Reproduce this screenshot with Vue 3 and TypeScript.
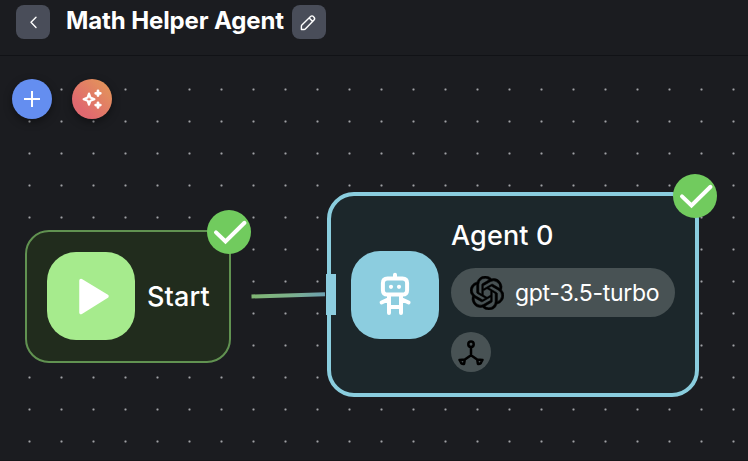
<script setup lang="ts">
import { ref } from 'vue'

interface FlowNode {
  id: string
  title: string
  kind: 'start' | 'agent'
  model?: string
}

const title = ref('Math Helper Agent')
const nodes = ref<FlowNode[]>([
  { id: 'start', title: 'Start', kind: 'start' },
  { id: 'agent', title: 'Agent 0', kind: 'agent', model: 'gpt-3.5-turbo' },
])
</script>

<template>
  <main class="app">
    <header class="header">
      <button class="square" aria-label="Back">
        <svg width="34" height="34" viewBox="0 0 34 34"><path d="M20 12.2 15 17.3l5 5.1" /></svg>
      </button>
      <h1>{{ title }}</h1>
      <button class="square" aria-label="Rename">
        <svg width="34" height="34" viewBox="0 0 34 34">
          <path d="M9.4 24.5v-3.2q0-.7.5-1.2l8.4-8.4q1.7-1.7 3.3 0l.2.2q1.7 1.7 0 3.4L13.3 24q-.5.5-1.2.5zM17.2 12.9l3.5 3.5" />
        </svg>
      </button>
    </header>

    <section class="canvas">
      <div class="dots"></div>
      <div class="toolbar">
        <button class="round add" aria-label="Add">
          <svg width="40" height="40" viewBox="0 0 40 40"><path d="M20 12v16M12 20h16" /></svg>
        </button>
        <button class="round magic" aria-label="Generate">
          <svg width="40" height="40" viewBox="0 0 40 40">
            <path d="M17 14.6l1.4 4 4 1.6-4 1.5-1.4 4-1.4-4-4-1.5 4-1.6z" />
            <path class="plus" d="M26 12v4.6M23.7 14.3h4.6M26 23.8v4.6M23.7 26.1h4.6" />
          </svg>
        </button>
      </div>

      <svg class="edge" width="76" height="10" viewBox="0 0 76 10">
        <defs>
          <linearGradient id="edge-fade" x1="0" x2="76" y1="0" y2="0" gradientUnits="userSpaceOnUse">
            <stop offset="0" stop-color="#80b672" />
            <stop offset=".5" stop-color="#7eb28a" />
            <stop offset="1" stop-color="#6b9fb2" />
          </linearGradient>
        </defs>
        <path d="M1.5 6.5 75 4.3" stroke="url(#edge-fade)" />
      </svg>

      <article v-for="node in nodes" :key="node.id" class="node" :class="node.kind">
        <span v-if="node.kind === 'agent'" class="handle"></span>
        <div class="tile">
          <svg v-if="node.kind === 'start'" width="88" height="88" viewBox="0 0 88 88">
            <path class="play" d="M34 28.5 60 44.3 34 60.5z" />
          </svg>
          <svg v-else width="88" height="88" viewBox="0 0 88 88">
            <path class="bot" d="M44 23.7V27.500M36.500 27.500h15q4.600 0 4.600 4.600v6.800q0 4.600-4.600 4.600h-15q-4.600 0-4.600-4.600v-6.800q0-4.600 4.600-4.600zM38 44.500v17.500M50 44.500v17.500M38 56h12M37.500 48.300 30.600 51.500M50.500 48.300 57.600 51.500" />
            <circle cx="40" cy="35.800" r="2.100" /><circle cx="48" cy="35.800" r="2.100" />
          </svg>
        </div>
        <div class="info">
          <h2>{{ node.title }}</h2>
          <template v-if="node.model">
            <div class="model">
              <svg width="34" height="34" viewBox="0 0 24 24">
                <path d="M22.2819 9.8211a5.9847 5.9847 0 0 0-.5157-4.9108 6.0462 6.0462 0 0 0-6.5098-2.9A6.0651 6.0651 0 0 0 4.9807 4.1818a5.9847 5.9847 0 0 0-3.9977 2.9 6.0462 6.0462 0 0 0 .7427 7.0966 5.98 5.98 0 0 0 .511 4.9107 6.051 6.051 0 0 0 6.5146 2.9001A5.9847 5.9847 0 0 0 13.2599 24a6.0557 6.0557 0 0 0 5.7718-4.2058 5.9894 5.9894 0 0 0 3.9977-2.9001 6.0557 6.0557 0 0 0-.7475-7.0729zm-9.022 12.6081a4.4755 4.4755 0 0 1-2.8764-1.0408l.1419-.0804 4.7783-2.7582a.7948.7948 0 0 0 .3927-.6813v-6.7369l2.02 1.1686a.071.071 0 0 1 .038.052v5.5826a4.504 4.504 0 0 1-4.4945 4.4944zm-9.6607-4.1254a4.4708 4.4708 0 0 1-.5346-3.0137l.142.0852 4.783 2.7582a.7712.7712 0 0 0 .7806 0l5.8428-3.3685v2.3324a.0804.0804 0 0 1-.0332.0615L9.74 19.9502a4.4992 4.4992 0 0 1-6.1408-1.6464zM2.3408 7.8956a4.485 4.485 0 0 1 2.3655-1.9728V11.6a.7664.7664 0 0 0 .3879.6765l5.8144 3.3543-2.0201 1.1685a.0757.0757 0 0 1-.071 0l-4.8303-2.7865A4.504 4.504 0 0 1 2.3408 7.872zm16.5963 3.8558L13.1038 8.364 15.1192 7.2a.0757.0757 0 0 1 .071 0l4.8303 2.7913a4.4944 4.4944 0 0 1-.6765 8.1042v-5.6772a.79.79 0 0 0-.407-.667zm2.0107-3.0231l-.142-.0852-4.7735-2.7818a.7759.7759 0 0 0-.7854 0L9.409 9.2297V6.8974a.0662.0662 0 0 1 .0284-.0615l4.8303-2.7866a4.4992 4.4992 0 0 1 6.6802 4.66zM8.3065 12.863l-2.02-1.1638a.0804.0804 0 0 1-.038-.0567V6.0742a4.4992 4.4992 0 0 1 7.3757-3.4537l-.142.0805L8.704 5.459a.7948.7948 0 0 0-.3927.6813zm1.0976-2.3654l2.602-1.4998 2.6069 1.4998v2.9994l-2.5974 1.4997-2.6067-1.4997Z" />
              </svg>
              <span>{{ node.model }}</span>
            </div>
            <div class="tool">
              <svg width="40" height="40" viewBox="0 0 40 40">
                <circle cx="20" cy="12.2" r="2.7" />
                <path d="M20 15v8.2l-6.5 4.5M20 23.2l6.5 4.5M8.5 27.900l5.300-.3-.7 4.300q-2.900.3-3.400-1.900zM31.500 27.900l-5.300-.3.7 4.300q2.900.3 3.400-1.900z" />
              </svg>
            </div>
          </template>
        </div>
        <span class="badge">
          <svg width="44" height="44" viewBox="0 0 44 44"><path d="M9 22.4 18.5 31.5 37.5 12.8" /></svg>
        </span>
      </article>
    </section>
  </main>
</template>

<style>
body { margin: 0; background: #1b1c20; }
</style>

<style scoped>
* { box-sizing: border-box; }
.app { display: flex; flex-direction: column; height: 461px; overflow: hidden; background: #1b1c20; color: #fff; font-family: Inter, "Liberation Sans", sans-serif; }
svg { display: block; fill: none; flex: none; }
button { border: 0; padding: 0; color: #fff; flex: none; }
h1, h2 { margin: 0; white-space: nowrap; }
.header { height: 56px; flex: none; display: flex; align-items: flex-start; padding: 5px 16px 0; border-bottom: 1px solid #111216; }
.square { width: 34px; height: 34px; border-radius: 8px; background: #494d59; }
.square path { stroke: #fff; stroke-width: 1.4; stroke-linecap: round; stroke-linejoin: round; }
h1 { margin-left: 16px; width: 226px; font-size: 24px; line-height: 32px; font-weight: 700; letter-spacing: -.12px; }
.canvas { position: relative; flex: 1; box-shadow: inset 0 -1px #16161a; }
.dots { position: absolute; inset: 16px 0 0; background: radial-gradient(circle at 16.5px 17.5px, #a0a1a5 0, #909195 .6px, transparent 1.6px) 13px 0 / 32px 32px; }
.toolbar { position: relative; display: flex; gap: 20px; padding: 23px 12px; }
.round { width: 40px; height: 40px; border-radius: 50%; box-shadow: 0 3px 8px #0006; }
.add { background: #648ef0; }
.magic { background: linear-gradient(45deg, #e0696f 25%, #e3955a 90%); }
.round path { stroke: #fff; stroke-width: 2; }
.magic path { stroke-width: 2.2; stroke-linejoin: round; }
.magic .plus { stroke-width: 2.8; stroke-linecap: round; }
.edge { position: absolute; left: 250px; top: 234px; }
.edge path { stroke-width: 4; }
.node { position: absolute; display: flex; align-items: center; }
.start { left: 25px; top: 174.4px; width: 206px; height: 132.5px; border: 2px solid #619251; border-radius: 24px; background: #212c1d; padding: 0 0 1px 20px; gap: 12px; }
.agent { left: 327px; top: 136px; width: 372px; height: 205px; border: 4px solid #8acdde; border-radius: 27px; background: #1c272b; padding: 0 0 0 20px; gap: 12px; }
.tile { width: 88px; height: 88px; flex: none; border-radius: 29px; background: #8ccddf; }
.start .tile { background: #a6eb8d; }
.play { fill: #fff; stroke: #fff; stroke-width: 3.5; stroke-linejoin: round; }
.bot { stroke: #fff; stroke-width: 4; stroke-linecap: round; stroke-linejoin: round; }
.tile circle { fill: #fff; }
h2 { font-size: 27px; line-height: 36px; font-weight: 500; }
.start h2 { padding-top: 1.2px; letter-spacing: .1px; }
.agent .info { align-self: flex-start; padding-top: 22px; }
.agent h2 { letter-spacing: .15px; }
.model { display: flex; align-items: center; width: 224px; height: 49px; margin-top: 14px; padding-left: 19px; gap: 11px; border-radius: 25px; background: #485254; font-size: 23px; font-weight: 400; letter-spacing: -.3px; white-space: nowrap; }
.model path { fill: #000; stroke: #000; stroke-width: .4; }
.tool { width: 40px; height: 40px; margin-top: 15px; border-radius: 50%; background: #485254; }
.tool circle, .tool path { stroke: #000; stroke-width: 2.5; stroke-linejoin: round; }
.handle { position: absolute; left: -5px; top: 78px; width: 10px; height: 41px; background: #8ccddf; }
.badge { position: absolute; width: 44px; height: 44px; right: -22px; top: -22px; border-radius: 50%; background: #71cb5e; }
.badge path { stroke: #fff; stroke-width: 4; stroke-linecap: round; }
</style>
